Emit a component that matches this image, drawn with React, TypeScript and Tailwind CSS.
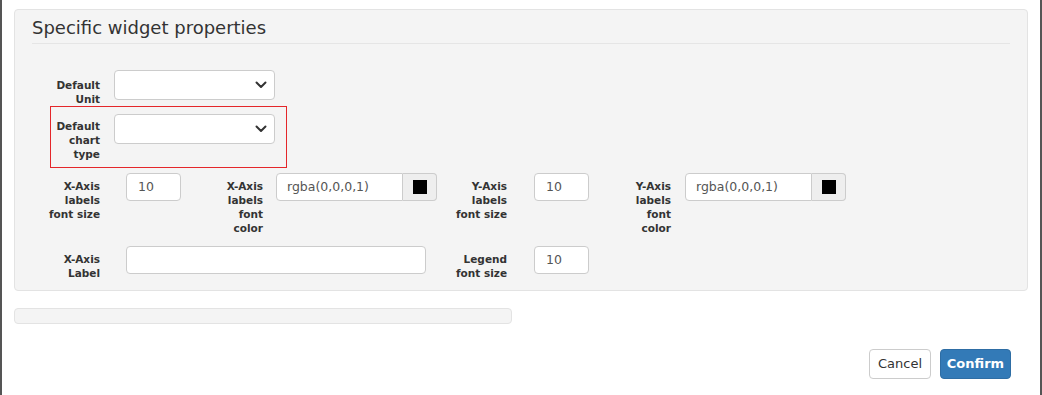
const font = "font-['DejaVu_Sans',Verdana,sans-serif]";

const Chevron = () => (
  <svg width="12" height="8" viewBox="0 0 12 8" className="shrink-0">
    <path d="M1.5 1.5 L6 6 L10.5 1.5" fill="none" stroke="#333" strokeWidth="2" strokeLinecap="round" strokeLinejoin="round" />
  </svg>
);

const Select = () => (
  <div className="flex items-center justify-end w-[161px] h-[30px] bg-white border border-[#ccc] rounded-[4px] pr-[7px]">
    <Chevron />
  </div>
);

const Label = ({ w, children }: { w: string; children: React.ReactNode }) => (
  <div className={`${w} shrink-0 text-right text-[10.5px] leading-[14px] font-bold text-[#333]`}>{children}</div>
);

const NumInput = ({ w = "w-[55px]", value = "10" }: { w?: string; value?: string }) => (
  <div className={`${w} h-[28px] bg-white border border-[#ccc] rounded-[4px] flex items-center px-[11px] text-[12.5px] text-[#555]`}>
    {value}
  </div>
);

const ColorInput = () => (
  <div className="flex h-[28px]">
    <div className="w-[127px] bg-white border border-[#ccc] rounded-l-[4px] flex items-center px-[10px] text-[12.5px] text-[#555]">
      rgba(0,0,0,1)
    </div>
    <div className="w-[34px] bg-[#eee] border border-l-0 border-[#ccc] rounded-r-[4px] flex items-center justify-center">
      <div className="w-[14px] h-[14px] bg-black" />
    </div>
  </div>
);

export default function App() {
  return (
    <div className={`${font} w-[1042px] h-[395px] bg-white border-l-2 border-r-2 border-[#555] flex flex-col`}>
      {/* main panel */}
      <div className="mt-[9px] ml-[12px] w-[1014px] h-[282px] bg-[#f4f4f4] border border-[#e3e3e3] rounded-[4px] px-[17px] pt-[6px]">
        <div className="text-[18px] leading-[24px] text-[#333] pb-[3px] border-b border-[#e5e5e5]">Specific widget properties</div>

        <div className="mt-[26px] flex gap-[14px]">
          <Label w="w-[68px] pt-[8px]">Default<br />Unit</Label>
          <Select />
        </div>

        <div className="ml-[18px] w-[237px] h-[62px] border border-[#e4262a] pt-[7px] flex gap-[14px]">
          <Label w="w-[49px] pt-[5px]">Default<br />chart<br />type</Label>
          <Select />
        </div>

        <div className="mt-[5px] flex">
          <Label w="w-[68px] pt-[6px]">X-Axis<br />labels<br />font size</Label>
          <div className="ml-[26px]"><NumInput /></div>
          <Label w="w-[82px] pt-[6px]">X-Axis<br />labels<br />font<br />color</Label>
          <div className="ml-[13px]"><ColorInput /></div>
          <Label w="w-[70px] pt-[6px]">Y-Axis<br />labels<br />font size</Label>
          <div className="ml-[27px]"><NumInput /></div>
          <Label w="w-[82px] pt-[6px]">Y-Axis<br />labels<br />font<br />color</Label>
          <div className="ml-[14px]"><ColorInput /></div>
        </div>

        <div className="mt-[11px] flex">
          <Label w="w-[68px] pt-[6px]">X-Axis<br />Label</Label>
          <div className="ml-[26px]"><NumInput w="w-[300px]" value="" /></div>
          <Label w="w-[81px] pt-[6px]">Legend<br />font size</Label>
          <div className="ml-[27px]"><NumInput /></div>
        </div>
      </div>

      {/* second panel */}
      <div className="mt-[17px] ml-[12px] w-[498px] h-[16px] bg-[#f4f4f4] border border-[#e3e3e3] rounded-[4px]" />

      <div className="mt-[25px] flex justify-end gap-[9px] pr-[29px]">
        <button className="w-[62px] h-[30px] bg-white border border-[#ccc] rounded-[4px] text-[13px] text-[#333]">Cancel</button>
        <button className="w-[71px] h-[30px] bg-[#337ab7] border border-[#2e6da4] rounded-[4px] text-[13px] font-bold text-white">Confirm</button>
      </div>
    </div>
  );
}
